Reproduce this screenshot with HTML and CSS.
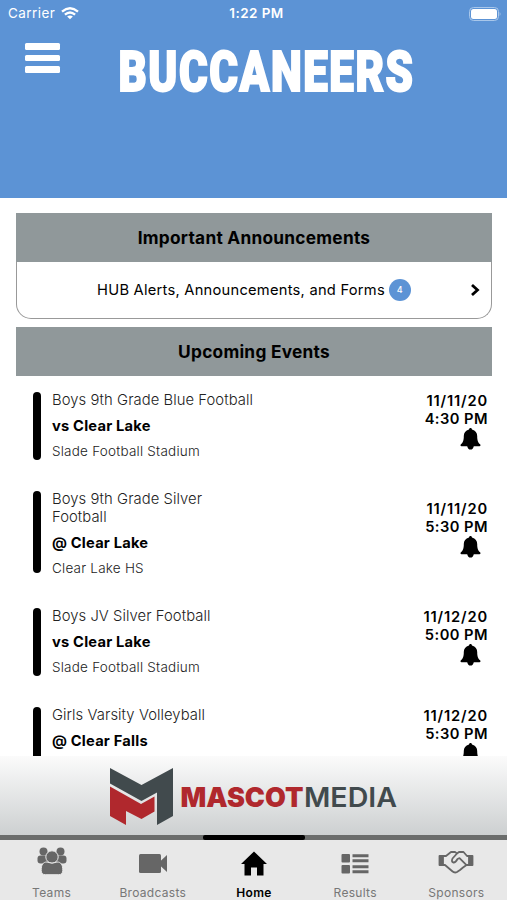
FILE: index.html
```html
<!DOCTYPE html>
<html lang="en">
<head>
<meta charset="utf-8">
<title>Buccaneers</title>
<link rel="stylesheet" href="styles.css">
</head>
<body>
<svg class="defs" width="0" height="0" aria-hidden="true">
  <symbol id="bell" viewBox="0 0 20 22"><path d="M10 0c.9 0 1.400.6 1.500 1.500C15 2.200 16.700 5 16.700 8c0 4.800 1 6.600 2.900 8.300.8.900.4 1.900-.6 1.900h-5.700C12.900 20.200 11.700 21.600 10 21.600S7.100 20.200 6.700 18.200H1c-1 0-1.400-1-.6-1.900C2.300 14.600 3.300 12.800 3.300 8c0-3 1.700-5.800 5.200-6.500C8.600.6 9.100 0 10 0z"/></symbol>
</svg>
<div class="app">
  <header class="header">
    <div class="status">
      <div class="carrier"><span>Carrier</span>
        <svg class="wifi" width="18" height="13" viewBox="0 0 18 13" fill="none" stroke="#fff" stroke-width="2.300"><path d="M1 4.700Q9-2.100 17 4.700M3.900 7.700Q9 3.300 14.100 7.700"/><path d="M9 12.300 6.100 9.500Q9 7.400 11.900 9.500z" fill="#fff" stroke="none"/></svg>
      </div>
      <span class="time">1:22 PM</span>
      <svg class="battery" width="32" height="14" viewBox="0 0 32 14"><rect x=".5" y=".5" width="29" height="13" rx="4" fill="none" stroke="#a9c7ea"/><rect x="2" y="2" width="26" height="10" rx="2.500" fill="#fff"/><path d="M30.700 5q1.600 2 0 4z" fill="#a9c7ea"/></svg>
    </div>
    <div class="brand">
      <div class="menu"><i></i><i></i><i></i></div>
      <svg class="team" width="310" height="74" viewBox="0 0 310 74"><text x="2.500" y="52" textLength="296" lengthAdjust="spacingAndGlyphs">BUCCANEERS</text></svg>
    </div>
  </header>
  <main class="content">
    <h2 class="heading">Important Announcements</h2>
    <div class="announcement">
      <span>HUB Alerts, Announcements, and Forms</span><b class="count">4</b>
      <svg class="chevron" width="10" height="14" viewBox="0 0 10 14"><path d="M2 2l5.500 5L2 12" fill="none" stroke="#000" stroke-width="2.800"/></svg>
    </div>
    <h2 class="heading">Upcoming Events</h2>
    <section class="events">
      <article class="event"><div class="info"><p class="title">Boys 9th Grade Blue Football</p><p class="opponent">vs Clear Lake</p><p class="place">Slade Football Stadium</p></div><div class="when"><span class="date">11/11/20</span><span>4:30 PM</span><svg class="bell"><use href="#bell"/></svg></div></article>
      <article class="event"><div class="info"><p class="title">Boys 9th Grade Silver<br>Football</p><p class="opponent">@ Clear Lake</p><p class="place">Clear Lake HS</p></div><div class="when"><span class="date">11/11/20</span><span>5:30 PM</span><svg class="bell"><use href="#bell"/></svg></div></article>
      <article class="event"><div class="info"><p class="title">Boys JV Silver Football</p><p class="opponent">vs Clear Lake</p><p class="place">Slade Football Stadium</p></div><div class="when"><span class="date">11/12/20</span><span>5:00 PM</span><svg class="bell"><use href="#bell"/></svg></div></article>
      <article class="event"><div class="info"><p class="title">Girls Varsity Volleyball</p><p class="opponent">@ Clear Falls</p><p class="place">&nbsp;</p></div><div class="when"><span class="date">11/12/20</span><span>5:30 PM</span><svg class="bell"><use href="#bell"/></svg></div></article>
    </section>
  </main>
  <div class="sponsor">
    <svg width="290" height="60" viewBox="0 0 290 60">
      <path d="M1 1 32.500 18 64 1V49L48 58V25.500L32.500 34 1 16.500z" fill="#414a4d"/>
      <path d="M1 19.500 32 37 45.500 29.500V44.500L32.500 52 17 44V58L1 49z" fill="#b0282d"/>
      <text class="mascot" x="71.500" y="39.500" textLength="123" lengthAdjust="spacingAndGlyphs">MASCOT</text>
      <text class="media" x="195" y="39.500" textLength="93" lengthAdjust="spacingAndGlyphs">MEDIA</text>
    </svg>
  </div>
  <div class="indicator"><i></i></div>
  <nav class="tabs">
    <div class="tab"><svg width="30" height="30" viewBox="0 0 30 30"><g fill="#666"><circle cx="6.500" cy="4.500" r="4"/><circle cx="23.500" cy="4.500" r="4"/><rect x=".5" y="8.500" width="11" height="8" rx="3"/><rect x="18.500" y="8.500" width="11" height="8" rx="3"/></g><g fill="#666" stroke="#e8e8e8"><circle cx="15" cy="10" r="6.200"/><path d="M4.200 23.500c0-6 1.800-8.500 5.800-8.500q5 2.500 10 0c4 0 5.800 2.500 5.800 8.500 0 2.500-1.500 4.200-4 4.200H8.200c-2.500 0-4-1.700-4-4.200z"/></g></svg><span>Teams</span></div>
    <div class="tab"><svg width="30" height="30" viewBox="0 0 30 30" fill="#666"><rect x="1" y="7" width="22" height="19" rx="1.500"/><path d="M22 14.500 29 8V25l-7-6.500z"/></svg><span>Broadcasts</span></div>
    <div class="tab active"><svg width="30" height="30" viewBox="0 0 30 30"><path d="M15 4.500 28 17h-3.500V28.500H18V20.500h-6V28.500H5.500V17H2z"/></svg><span>Home</span></div>
    <div class="tab"><svg width="30" height="30" viewBox="0 0 30 30" fill="#666"><rect x="1.500" y="7" width="8.500" height="8.500" rx="1"/><rect x="1.500" y="18" width="8.500" height="8.500" rx="1"/><path d="M12.500 7.300h16v3h-16zM12.500 12.300h16v3h-16zM12.500 18.300h16v3h-16zM12.500 23.300h16v3h-16z"/></svg><span>Results</span></div>
    <div class="tab"><svg width="36" height="30" viewBox="0 0 36 30" fill="none" stroke="#666" stroke-width="1.800" stroke-linejoin="round" stroke-linecap="round"><path d="M1.500 9h3.500v9H1.500zM31 9h3.500v9h-3.500z" fill="#666"/><path d="M5 9h3l5-4h4l2 1.500 2-1.500h4.500l3.500 4h2M5 18h2l7 6q2.500 2.300 5 1l3-2 3-2.500 3.500-2.500H31M19 6.500l-4.500 5q-1.500 3.500 1 4 2 .2 4-3.500l2-.8 6.500 6.500"/></svg><span>Sponsors</span></div>
  </nav>
</div>
</body>
</html>
```
FILE: styles.css
```css
* { box-sizing: border-box; margin: 0; padding: 0; }
body { width: 507px; height: 900px; overflow: hidden; background: #fff; color: #000; font-family: Inter, "Liberation Sans", sans-serif; }
.defs { position: absolute; }
svg { display: block; flex: none; }
.app { height: 900px; display: flex; flex-direction: column; }

.header { flex: none; height: 198px; background: #5c93d5; color: #fff; }
.status { height: 27px; padding: 0 6px 0 8px; display: grid; grid-template-columns: 1fr auto 1fr; align-items: center; font-size: 13.500px; line-height: 27px; letter-spacing: .45px; }
.carrier { display: flex; align-items: center; gap: 6px; }
.time { padding-left: 4px; font-weight: 600; }
.battery { justify-self: end; }
.brand { display: flex; align-items: flex-start; padding: 16px 0 0 25px; }
.menu { width: 35px; display: flex; flex-direction: column; gap: 5px; margin-right: 56px; }
.menu i { height: 6.700px; border-radius: 1.500px; background: #fff; }
.team { margin-top: -4px; overflow: visible; }
.team text { font-family: Roboto, sans-serif; font-weight: 900; font-size: 56px; letter-spacing: 2px; fill: #fff; stroke: #fff; stroke-width: 2px; }

.content { flex: none; height: 558px; padding: 15px 15px 0 16px; overflow: hidden; }
.heading { height: 49px; background: #90989a; text-align: center; font-size: 17.300px; font-weight: 700; line-height: 49px; letter-spacing: .25px; }
.announcement { position: relative; height: 57px; margin-bottom: 8px; padding-bottom: 1px; display: flex; align-items: center; justify-content: center; gap: 4px; border: 1.500px solid #999; border-top: 0; border-radius: 0 0 15px 15px; font-size: 14.700px; letter-spacing: .24px; }
.count { width: 22px; height: 22px; border-radius: 50%; background: #5c93d5; color: #fff; font-size: 9px; font-weight: 500; line-height: 22px; text-align: center; }
.chevron { position: absolute; right: 11px; top: 21px; }

.events { padding: 16px 4px 0 17px; display: flex; flex-direction: column; gap: 14px; }
.event { display: flex; align-items: center; justify-content: space-between; }
.info { position: relative; padding: 0 0 17px 19px; }
.info::before { content: ""; position: absolute; left: 0; top: 0; width: 7.500px; height: 80%; border-radius: 4px; background: #000; }
.title { margin-top: -1px; color: #222; font-size: 14.800px; line-height: 18px; font-weight: 300; letter-spacing: .06px; }
.opponent { margin-top: 7.500px; font-size: 14.700px; line-height: 18px; font-weight: 700; letter-spacing: .2px; }
.place { margin-top: 8.500px; color: #222; font-size: 13.500px; line-height: 17px; font-weight: 300; letter-spacing: .22px; }
.when { display: flex; flex-direction: column; align-items: flex-end; padding-bottom: 27px; font-size: 14.700px; line-height: 18px; font-weight: 600; letter-spacing: .45px; }
.date { letter-spacing: .85px; }
.bell { width: 21px; height: 22px; margin-right: 7px; }

.sponsor { flex: none; height: 79px; padding: 11px 0 0 109px; background: linear-gradient(#fbfbfb, #cdd0d1); }
.sponsor text { font-family: Inter, sans-serif; font-size: 27px; }
.mascot { font-weight: 900; fill: #b0282d; }
.media { font-weight: 600; fill: #414a4d; }
.indicator { flex: none; height: 5px; background: #6b6d6c; display: flex; justify-content: center; }
.indicator i { width: 102px; border-radius: 2px; background: #000; }
.tabs { flex: none; height: 60px; background: #e8e8e8; display: grid; grid-template-columns: repeat(5, 1fr); padding-left: 1px; }
.tab { display: flex; flex-direction: column; align-items: center; padding-top: 7px; color: #777; font-size: 12px; line-height: 16px; letter-spacing: .3px; }
.tab span { margin-top: 8px; }
.active { color: #000; font-weight: 600; }
```
